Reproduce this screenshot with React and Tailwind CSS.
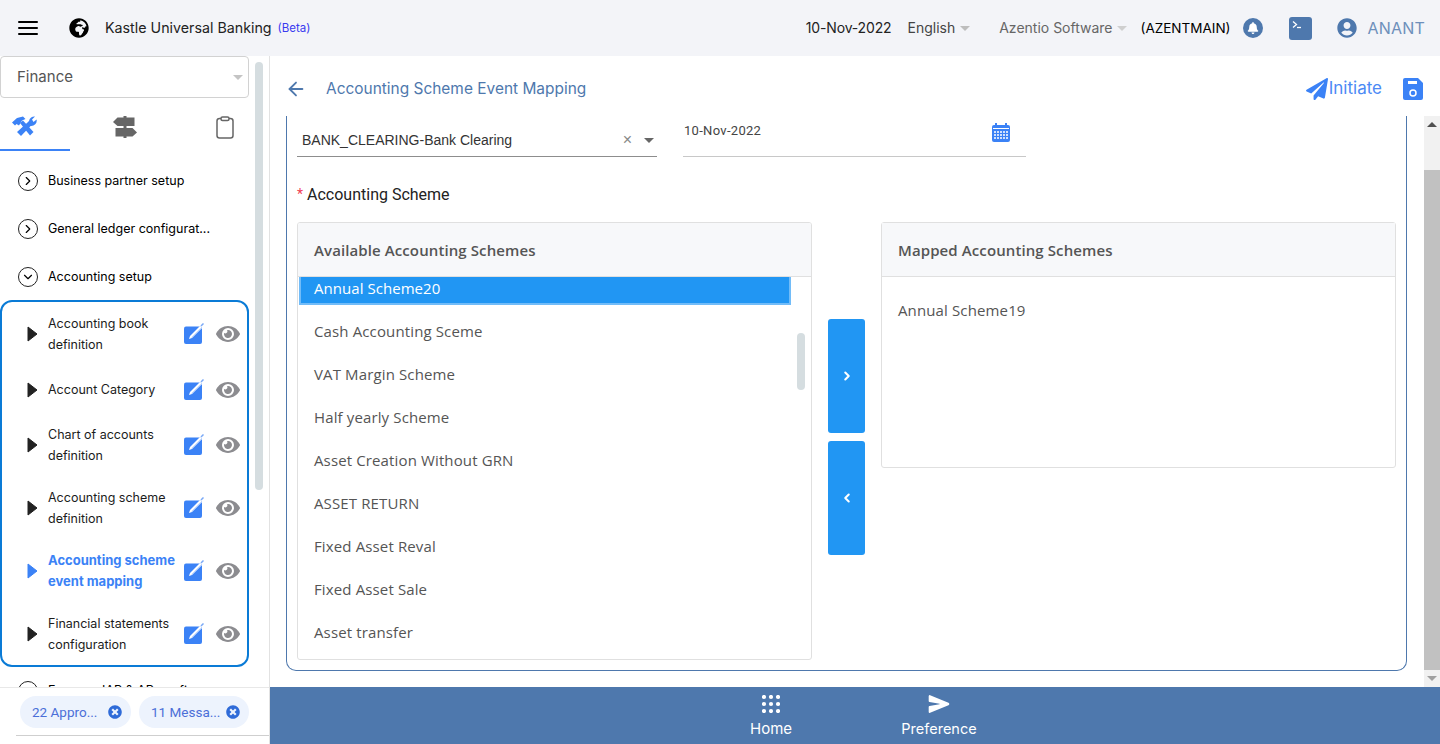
import { FaBell, FaUserCircle, FaEye, FaPaperPlane, FaGlobeAfrica, FaTimesCircle } from "react-icons/fa";
import { FiMenu, FiArrowLeft, FiChevronRight, FiChevronLeft, FiChevronDown } from "react-icons/fi";
import { IoSend } from "react-icons/io5";

const Caret = ({ className }) => (
  <span className={`inline-block w-0 h-0 border-x-[5px] border-x-transparent border-t-[5px] ${className}`} />
);

const ToolsIcon = () => (
  <svg width="25" height="21" viewBox="0 0 25 21" fill="#3b82f6">
    <path d="M0 6.5 L5 2 L11 0.5 L13.5 3 L10 4.5 L7 9.5 L4.5 8 L3 9.5 Z" />
    <path d="M8 7 L11 4.5 L21.5 16 L18 19.5 Z" />
    <path d="M17 5 a5.5 5.5 0 0 1 6-4.5 L20 3.5 L21.5 6 L24.6 3.5 a5.5 5.5 0 0 1-6 6.5 L9 20 L5 16 L15.5 6.5 Z" />
  </svg>
);

const SignsIcon = () => (
  <svg width="24" height="22" viewBox="0 0 24 22" fill="#666">
    <rect x="10.5" y="0" width="3" height="22" />
    <path d="M0 6 L4.5 1.5 L21.5 1.5 L21.5 10 L4.5 10 Z" />
    <path d="M2.5 12 L19.5 12 L24 16.5 L19.5 20.5 L2.5 20.5 Z" />
  </svg>
);

const ClipboardIcon = () => (
  <svg width="18" height="23" viewBox="0 0 18 23" fill="none" stroke="#666" strokeWidth="1.5">
    <rect x="1" y="2.5" width="16" height="19.5" rx="2.5" />
    <rect x="5" y="1" width="8" height="3.5" rx="1.5" fill="#fff" />
  </svg>
);

const TopLevel = ({ label, open }) => (
  <div className="h-12 flex items-center pl-[18px] text-[12.5px] text-black">
    <span className="w-[20px] h-[20px] rounded-full border-[1.5px] border-[#222] flex items-center justify-center mr-[10px]">
      {open ? <FiChevronDown size={14} /> : <FiChevronRight size={14} />}
    </span>
    {label}
  </div>
);

const EditIcon = () => (
  <svg width="22" height="22" viewBox="0 0 22 22">
    <rect x="1" y="3.5" width="18" height="17.5" rx="2" fill="#3b82f6" />
    <path d="M6 16 L7 13 L17 3 L19 5 L9 15 Z" fill="#fff" />
    <path d="M18 3 L20.5 0.5" stroke="#7aa9f7" strokeWidth="1.5" />
    <path d="M8.5 14.5 L18 5" stroke="#b7d0fb" strokeWidth="0.8" />
  </svg>
);

const SubItem = ({ lines, active, h }) => (
  <div className={`flex items-center pl-[25px] ${h}`}>
    <svg width="11" height="16" viewBox="0 0 11 16" className="shrink-0">
      <path d="M1 1 L10 8 L1 15 Z" fill={active ? "#3b82f6" : "#222"} stroke={active ? "#3b82f6" : "#222"} strokeWidth="1" strokeLinejoin="round" />
    </svg>
    <div className={`ml-[10px] w-[133px] leading-[21px] ${active ? "text-[13px] font-bold text-[#3b82f6]" : "text-[12.5px] text-[#1c1c1c]"}`}>
      {lines.map((l) => (
        <div key={l} className="whitespace-nowrap">{l}</div>
      ))}
    </div>
    <span className="ml-[2px]"><EditIcon /></span>
    <FaEye size={24} className="ml-[11px] text-[#8c8c90]" />
  </div>
);

const Chip = ({ label, w }) => (
  <div className={`h-8 ${w} rounded-full bg-[#edf3fd] flex items-center justify-between pl-3 pr-[9px] text-[13.5px] text-[#4b6fd8] font-['Roboto',sans-serif]`}>
    <span className="whitespace-nowrap mt-[1px]">{label}</span>
    <FaTimesCircle size={14} className="text-[#2f6bd8]" />
  </div>
);

const available = [
  "Cash Accounting Sceme",
  "VAT Margin Scheme",
  "Half yearly Scheme",
  "Asset Creation Without GRN",
  "ASSET RETURN",
  "Fixed Asset Reval",
  "Fixed Asset Sale",
  "Asset transfer",
];

export default function App() {
  return (
    <div className="w-[1440px] h-[744px] overflow-hidden bg-white flex flex-col font-['Inter',sans-serif]">
      {/* Top bar */}
      <header className="h-14 shrink-0 bg-[#f3f4f8] flex items-center text-[14px]">
        <FiMenu size={24} className="ml-4 text-black" />
        <FaGlobeAfrica size={20} className="ml-[29px] text-black" />
        <span className="ml-4 text-[#222] text-[14.25px]">Kastle Universal Banking</span>
        <span className="ml-[6px] mt-[2px] text-[11.5px] text-[#3a3af0]">(Beta)</span>
        <div className="ml-auto flex items-center">
          <span className="text-[#222] tracking-[-0.15px] -mt-[1px]">10-Nov-2022</span>
          <span className="ml-4 text-[#444] -mt-[1px]">English</span>
          <Caret className="ml-[5px] border-t-[#bdbdbd]" />
          <span className="ml-[29px] text-[#666] -mt-[1px]">Azentio Software</span>
          <Caret className="ml-[4px] border-t-[#cfcfcf]" />
          <span className="ml-[14px] text-[13.5px] text-black">(AZENTMAIN)</span>
          <span className="ml-[13px] w-5 h-5 rounded-full bg-[#4e78ad] flex items-center justify-center">
            <FaBell size={12} className="text-white" />
          </span>
          <svg width="23" height="23" viewBox="0 0 23 23" className="ml-[26px]">
            <rect width="23" height="23" rx="3" fill="#4e78ad" />
            <path d="M4 4.5 L7.5 7.5 L4 10.5" fill="none" stroke="#fff" strokeWidth="1.3" />
            <path d="M8 10.5 H12" stroke="#fff" strokeWidth="1.3" />
          </svg>
          <FaUserCircle size={20} className="ml-[25px] text-[#4e78ad]" />
          <span className="ml-[10px] mr-[15px] text-[16px] text-[#6d8fbb] tracking-[0.2px]">ANANT</span>
        </div>
      </header>

      <div className="flex flex-1 min-h-0">
        {/* Sidebar */}
        <aside className="w-[270px] shrink-0 border-r border-[#e2e2e2] flex flex-col relative">
          <div className="flex-1 min-h-0 overflow-hidden w-[249px]">
            <div className="h-[42px] rounded-[4px] border border-[#d2d2d2] flex items-center justify-between pl-4 pr-[5px] text-[15px] text-[#555]">
              Finance
              <Caret className="border-t-[#c4c4c4]" />
            </div>
            <div className="h-[53px] flex items-center">
              <div className="w-[70px] h-full flex items-center justify-center border-b-2 border-[#3b82f6] pr-[22px] pl-[1px] pt-[5px]">
                <ToolsIcon />
              </div>
              <div className="w-[110px] flex justify-center pt-[5px]">
                <SignsIcon />
              </div>
              <div className="flex-1 flex justify-center pl-[21px] pt-[5px]">
                <ClipboardIcon />
              </div>
            </div>
            <div className="pt-[6px]">
              <TopLevel label="Business partner setup" />
              <TopLevel label="General ledger configurat..." />
              <TopLevel label="Accounting setup" open />
            </div>
            <div className="-mt-[1px] border-2 border-[#0a7bd6] rounded-[12px] h-[367px] flex flex-col pt-[1px]">
              <SubItem h="h-[63px]" lines={["Accounting book", "definition"]} />
              <SubItem h="h-[48px]" lines={["Account Category"]} />
              <SubItem h="h-[63px]" lines={["Chart of accounts", "definition"]} />
              <SubItem h="h-[64px]" lines={["Accounting scheme", "definition"]} />
              <SubItem h="h-[63px]" active lines={["Accounting scheme", "event mapping"]} />
              <SubItem h="h-[63px]" lines={["Financial statements", "configuration"]} />
            </div>
            <TopLevel label="Expense IAP & AP config" />
          </div>
          <div className="absolute left-[255px] top-[6px] w-2 h-[428px] rounded-full bg-[#d5dde0]" />
          <div className="h-[57px] shrink-0 border-t border-[#e8e8e8] relative bg-white">
            <div className="flex gap-2 pl-5 pt-[8px]">
              <Chip label="22 Appro..." w="w-[111px]" />
              <Chip label="11 Messa..." w="w-[110px]" />
            </div>
            <div className="absolute left-4 right-0 top-[47px] border-t border-[#cfcfcf]" />
          </div>
        </aside>

        {/* Main */}
        <main className="flex-1 min-w-0 flex flex-col">
          <div className="flex flex-1 min-h-0 flex-col relative">
            <div className="h-[60px] shrink-0 flex items-center pl-4 pr-4 pt-[5px]">
              <FiArrowLeft size={22} className="text-[#4e78ad] -ml-[1px]" />
              <span className="ml-[19px] text-[15.45px] text-[#4e78ad]">Accounting Scheme Event Mapping</span>
              <FaPaperPlane size={22} className="ml-auto text-[#3b82f6]" />
              <span className="ml-[1px] text-[17px] text-[#4b8af5]">Initiate</span>
              <svg width="22" height="24" viewBox="0 0 22 24" className="ml-[20px]">
                <path d="M3 1h13l5 5v15a2 2 0 0 1-2 2H3a2 2 0 0 1-2-2V3a2 2 0 0 1 2-2z" fill="#3b82f6" />
                <rect x="6" y="4" width="9" height="3" fill="#fff" />
                <circle cx="11" cy="16" r="3" fill="none" stroke="#fff" strokeWidth="1.5" />
              </svg>
            </div>
            <div className="flex-1 min-h-0 flex">
              <div className="w-[1154px] shrink-0 pl-4 pb-4">
                <div className="h-full w-[1121px] border border-t-0 border-[#4e78ad] rounded-b-[10px] px-[10px] overflow-hidden">
                  <div className="flex h-[41px]">
                    <div className="w-[360px] h-[41px] border-b border-[#8d8d8d] flex items-center pl-[5px] pr-[3px] pt-[9px] text-[14px] text-[#333] font-['Liberation_Sans',sans-serif]">
                      BANK_CLEARING-Bank Clearing
                      <span className="ml-auto text-[#888] text-[16px] leading-none -mt-[1px]">×</span>
                      <Caret className="ml-[12px] border-t-[#666]" />
                    </div>
                    <div className="ml-[26px] w-[343px] h-[41px] border-b border-[#c8c8c8] flex items-start justify-between pl-[1px] pr-[15px] pt-[5px] text-[13px] text-[#444] font-['Roboto',sans-serif] tracking-[0.3px]">
                      10-Nov-2022
                      <svg width="20" height="20" viewBox="0 0 20 20" className="mt-[2px]">
                        <rect x="1" y="2" width="18" height="17" rx="2" fill="#3b82f6" />
                        <rect x="4" y="0" width="2" height="3" fill="#3b82f6" />
                        <rect x="14" y="0" width="2" height="3" fill="#3b82f6" />
                        <rect x="2" y="5" width="16" height="1" fill="#fff" />
                        {[8, 11, 14].map((y) => [3, 6, 9, 12, 15].map((x) => <rect key={`${x}-${y}`} x={x} y={y} width="2" height="2" fill="#cfe0fd" />))}
                      </svg>
                    </div>
                  </div>
                  <div className="h-[65px] flex items-center pt-[10px] text-[16px] text-[#222] font-['Roboto',sans-serif]">
                    <span className="text-[#ef4056] mr-[4px] text-[14px]">*</span>Accounting Scheme
                  </div>
                  <div className="flex font-['Open_Sans',sans-serif] text-[#555]">
                    <div className="w-[515px] h-[438px] border border-[#e0e0e0] rounded-[3px] flex flex-col overflow-hidden relative">
                      <div className="h-[54px] shrink-0 bg-[#f7f8fa] border-b border-[#e0e0e0] flex items-center pl-4 pt-[1px] text-[15px] font-semibold text-[#555] tracking-[0.1px]">
                        Available Accounting Schemes
                      </div>
                      <div className="ml-[1px] mr-[20px] h-[28px] shrink-0 bg-[#2196f3] border-2 border-t-0 border-[#72bcf8] flex items-center pl-[13px] pb-[4px] text-[15px] text-white tracking-[0.05px]">
                        Annual Scheme20
                      </div>
                      {available.map((item) => (
                        <div key={item} className="h-[43px] shrink-0 flex items-center pl-4 text-[15px] pt-[10px] tracking-[0.13px]">{item}</div>
                      ))}
                      <div className="absolute left-[499px] top-[110px] w-2 h-[57px] rounded-full bg-[#d5dde0]" />
                    </div>
                    <div className="w-[69px] flex flex-col items-center pt-[97px] gap-2">
                      <button className="w-[37px] h-[114px] rounded-[3px] bg-[#2196f3] flex items-center justify-center text-white"><FiChevronRight size={14} strokeWidth={3.5} /></button>
                      <button className="w-[37px] h-[114px] rounded-[3px] bg-[#2196f3] flex items-center justify-center text-white"><FiChevronLeft size={14} strokeWidth={3.5} /></button>
                    </div>
                    <div className="w-[515px] h-[246px] border border-[#e0e0e0] rounded-[3px]">
                      <div className="h-[54px] bg-[#f7f8fa] border-b border-[#e0e0e0] flex items-center pl-4 pt-[1px] text-[15px] font-semibold text-[#555] tracking-[0.1px]">
                        Mapped Accounting Schemes
                      </div>
                      <div className="pl-4 pt-[23px] text-[15px] leading-5 tracking-[0.13px]">Annual Scheme19</div>
                    </div>
                  </div>
                </div>
              </div>
              <div className="ml-auto w-4 bg-[#f1f1f1] flex flex-col items-center">
                <Caret className="mt-[6px] rotate-180 border-t-[#505050] border-x-[4px] border-t-[4px]" />
                <div className="mt-[43px] w-full flex-1 bg-[#c1c1c1]" />
                <Caret className="my-[6px] border-t-[#a0a0a0] border-x-[4px] border-t-[4px]" />
              </div>
            </div>
          </div>

          {/* Footer */}
          <footer className="h-[57px] shrink-0 bg-[#4e78ad] flex text-white text-[15px] relative">
            <div className="w-[1002px] flex">
              <div className="ml-[460px] w-[82px] flex flex-col items-center pt-[8px]">
                <svg width="18" height="18" viewBox="0 0 18 18" fill="#fff">
                  {[2, 9, 16].map((y) => [2, 9, 16].map((x) => <circle key={`${x}-${y}`} cx={x} cy={y} r="2.1" />))}
                </svg>
                <span className="mt-[7px] leading-[18px]">Home</span>
              </div>
              <div className="ml-[86px] w-[82px] flex flex-col items-center pt-[6px]">
                <IoSend size={22} />
                <span className="mt-[5px] leading-[18px] text-[14.5px]">Preference</span>
              </div>
            </div>
          </footer>
        </main>
      </div>
    </div>
  );
}
